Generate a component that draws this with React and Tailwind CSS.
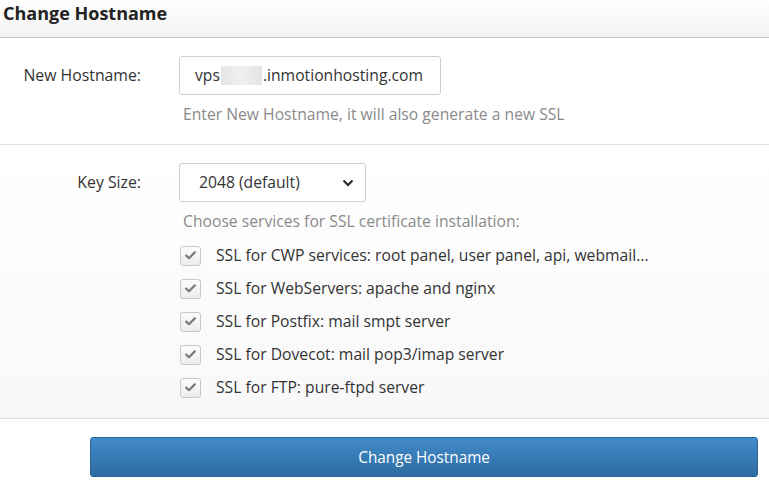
import React from "react";

const font = { fontFamily: '"Open Sans", "Noto Sans", sans-serif' };

function Check() {
  return (
    <span className="flex h-[20px] w-[21px] shrink-0 items-center justify-center rounded-[3px] border border-[#c8c8c8] bg-gradient-to-b from-[#fdfdfd] to-[#ececec]">
      <svg width="11" height="9" viewBox="0 0 11 9">
        <path d="M1.2 4.6 L4 7.2 L9.8 1.4" fill="none" stroke="#7a7a7a" strokeWidth="2.2" strokeLinecap="round" strokeLinejoin="round" />
      </svg>
    </span>
  );
}

const items = [
  "SSL for CWP services: root panel, user panel, api, webmail...",
  "SSL for WebServers: apache and nginx",
  "SSL for Postfix: mail smpt server",
  "SSL for Dovecot: mail pop3/imap server",
  "SSL for FTP: pure-ftpd server",
];

export default function App() {
  return (
    <div className="h-[483px] w-[769px] overflow-hidden bg-white text-[#333]" style={font}>
      <div className="flex h-[38px] items-start border-b border-[#c4c4c4] bg-gradient-to-b from-white to-[#f2f2f2] pl-[3px] pt-0">
        <h1 className="text-[18px] font-bold leading-[26px] text-[#222]">Change Hostname</h1>
      </div>

      <div className="flex h-[107px] flex-col border-b border-[#e0e0e0] pt-[18px]">
        <div className="flex items-center">
          <label className="w-[141px] text-right text-[15.8px] text-[#333]">New Hostname:</label>
          <div className="ml-[38px] flex h-[39px] w-[262px] items-center rounded-[3px] border border-[#cfcfcf] bg-white pl-[15px] text-[15.7px] text-[#333]">
            <span>vps</span>
            <span className="mx-[1px] inline-block h-[19px] w-[41px] bg-gradient-to-r from-[#e6e6e6] via-[#f0f0f0] to-[#e4e4e4]"></span>
            <span>.inmotionhosting.com</span>
          </div>
        </div>
        <p className="ml-[183px] mt-[8px] text-[15.7px] text-[#8a8a8a]">Enter New Hostname, it will also generate a new SSL</p>
      </div>

      <div className="flex h-[274px] flex-col border-b border-[#dcdcdc] bg-gradient-to-b from-white to-[#f8f8f8] pt-[18px]">
        <div className="flex items-center">
          <label className="w-[141px] text-right text-[15.8px] text-[#333]">Key Size:</label>
          <div className="ml-[38px] flex h-[39px] w-[187px] items-center justify-between rounded-[3px] border border-[#cfcfcf] bg-white pl-[19px] pr-[11px] text-[15.7px] text-[#333]">
            <span>2048 (default)</span>
            <svg width="12" height="8" viewBox="0 0 12 8">
              <path d="M1.5 1.5 L6 6 L10.5 1.5" fill="none" stroke="#222" strokeWidth="2" />
            </svg>
          </div>
        </div>
        <p className="ml-[183px] mt-[8px] text-[15.7px] text-[#8a8a8a]">Choose services for SSL certificate installation:</p>
        <div className="ml-[180px] mt-[12px] flex flex-col gap-[13px]">
          {items.map((t) => (
            <div key={t} className="flex h-[20px] items-center gap-[15px]">
              <Check />
              <span className="text-[15.7px] text-[#333]">{t}</span>
            </div>
          ))}
        </div>
      </div>

      <div className="pl-[90px] pt-[18px]">
        <button className="flex h-[40px] w-[668px] items-center justify-center rounded-[3px] border border-[#2a6496] bg-gradient-to-b from-[#428bca] to-[#2d6ca2] text-white">
          <span className="inline-block scale-x-[0.9] text-[17px]">Change Hostname</span>
        </button>
      </div>
    </div>
  );
}
